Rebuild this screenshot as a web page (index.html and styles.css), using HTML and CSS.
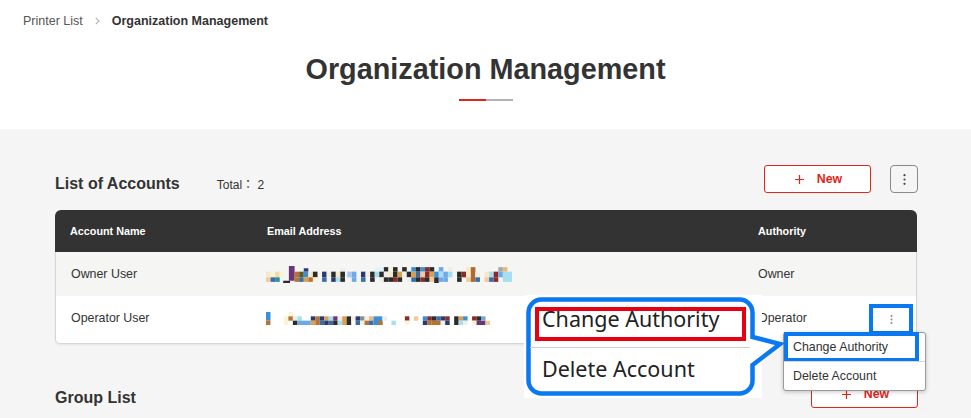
FILE: index.html
```html
<!DOCTYPE html>
<html lang="en">
<head>
<meta charset="utf-8">
<title>Organization Management</title>
<link rel="stylesheet" href="styles.css">
</head>
<body>
<header class="page-head">
  <nav class="crumbs">
    <span class="crumb">Printer List</span>
    <svg class="crumb-sep" width="5" height="8" viewBox="0 0 5 8"><path d="M0.8 0.8L4 4L0.8 7.2" fill="none" stroke="#b0b0b0" stroke-width="1.1"/></svg>
    <span class="crumb crumb--current">Organization Management</span>
  </nav>
  <h1 class="page-title">Organization Management</h1>
  <div class="title-rule"><span class="title-rule__red"></span><span class="title-rule__gray"></span></div>
</header>

<main class="content">
  <section class="block">
    <div class="block-head">
      <div class="block-title">
        <h2>List of Accounts</h2>
        <span class="total">Total： 2</span>
      </div>
      <div class="block-actions">
        <button class="btn-new" type="button">
          <svg width="9" height="9" viewBox="0 0 9 9"><path d="M4.5 0V9M0 4.5H9" stroke="#e0251b" stroke-width="1.2"/></svg>
          <span>New</span>
        </button>
        <button class="btn-more" type="button" aria-label="More">
          <svg width="3" height="11" viewBox="0 0 3 11"><circle cx="1.5" cy="1.2" r="1.1" fill="#444"/><circle cx="1.5" cy="5.5" r="1.1" fill="#444"/><circle cx="1.5" cy="9.8" r="1.1" fill="#444"/></svg>
        </button>
      </div>
    </div>

    <div class="table">
      <div class="table-head">
        <div class="th">Account Name</div>
        <div class="th">Email Address</div>
        <div class="th">Authority</div>
      </div>
      <div class="table-body">
        <div class="tr tr--shade">
          <div class="td">Owner User</div>
          <div class="td">
            <svg class="mosaic" width="246" height="17" viewBox="0 0 215 15" preserveAspectRatio="none">
              <rect x="0" y="5" width="4" height="5" fill="#f6e9c8"/><rect x="0" y="10" width="4" height="4" fill="#f2c9a0"/>
              <rect x="4" y="5" width="4" height="5" fill="#faf3d6"/><rect x="4" y="10" width="4" height="4" fill="#3a6ea5"/>
              <rect x="8" y="5" width="4" height="5" fill="#f3d9a8"/><rect x="8" y="10" width="4" height="4" fill="#2a8fa0"/>
              <rect x="12" y="5" width="4" height="5" fill="#faf3d6"/>
              <rect x="15" y="13" width="6" height="2" fill="#2b2b2b"/>
              <rect x="20" y="0" width="5" height="13" fill="#6b3576"/>
              <rect x="25" y="5" width="4" height="5" fill="#b87333"/><rect x="25" y="10" width="4" height="4" fill="#b87333"/>
              <rect x="29" y="5" width="4" height="5" fill="#5b5b2e"/><rect x="29" y="10" width="4" height="4" fill="#3a6ea5"/>
              <rect x="33" y="2" width="4" height="3" fill="#2b3a6e"/><rect x="33" y="5" width="4" height="5" fill="#3a8fd9"/><rect x="33" y="10" width="4" height="4" fill="#d8a050"/>
              <rect x="37" y="5" width="4" height="5" fill="#f6e9c8"/><rect x="37" y="10" width="4" height="4" fill="#b87333"/>
              <rect x="41" y="5" width="4" height="5" fill="#2b2b2b"/><rect x="41" y="10" width="4" height="4" fill="#faf3d6"/>
              <rect x="49" y="5" width="4" height="5" fill="#2b3a6e"/><rect x="49" y="10" width="4" height="4" fill="#3a6ea5"/>
              <rect x="53" y="5" width="4" height="5" fill="#efefe8"/>
              <rect x="57" y="5" width="4" height="5" fill="#2b2b2b"/><rect x="57" y="10" width="4" height="4" fill="#2b3a6e"/>
              <rect x="61" y="5" width="4" height="5" fill="#f6e9c8"/><rect x="61" y="10" width="4" height="4" fill="#a8dff0"/>
              <rect x="65" y="2" width="4" height="3" fill="#efefe8"/><rect x="65" y="5" width="4" height="5" fill="#2b2b2b"/><rect x="65" y="10" width="4" height="4" fill="#2b2b2b"/>
              <rect x="71" y="5" width="4" height="5" fill="#a8c8f0"/>
              <rect x="75" y="5" width="4" height="5" fill="#6ea8e8"/><rect x="75" y="10" width="4" height="4" fill="#6ea8e8"/>
              <rect x="83" y="5" width="4" height="5" fill="#2b3a6e"/><rect x="83" y="10" width="4" height="4" fill="#3a6ea5"/>
              <rect x="87" y="5" width="4" height="5" fill="#efefe8"/>
              <rect x="91" y="5" width="4" height="5" fill="#2b2b2b"/><rect x="91" y="10" width="4" height="4" fill="#2b2b2b"/>
              <rect x="95" y="1" width="4" height="4" fill="#e3f4f8"/><rect x="95" y="5" width="4" height="5" fill="#a8dff0"/>
              <rect x="99" y="1" width="4" height="4" fill="#e3f4f8"/><rect x="99" y="5" width="4" height="5" fill="#2b2b2b"/><rect x="99" y="10" width="4" height="4" fill="#efefe8"/>
              <rect x="103" y="1" width="4" height="4" fill="#2b2b2b"/><rect x="103" y="5" width="4" height="5" fill="#efefe8"/><rect x="103" y="10" width="4" height="4" fill="#2b2b2b"/>
              <rect x="107" y="1" width="4" height="4" fill="#faf3d6"/><rect x="107" y="5" width="4" height="5" fill="#f6e9c8"/><rect x="107" y="10" width="4" height="4" fill="#2b2b2b"/>
              <rect x="111" y="1" width="4" height="4" fill="#2b2b2b"/><rect x="111" y="5" width="4" height="5" fill="#2b2b2b"/><rect x="111" y="10" width="4" height="4" fill="#8b2a2a"/>
              <rect x="115" y="5" width="4" height="5" fill="#d8a050"/><rect x="115" y="10" width="4" height="4" fill="#2b2b2b"/>
              <rect x="119" y="1" width="4" height="4" fill="#2b2b2b"/><rect x="119" y="5" width="4" height="5" fill="#efefe8"/>
              <rect x="123" y="5" width="4" height="5" fill="#2b2b2b"/><rect x="123" y="10" width="4" height="4" fill="#efefe8"/>
              <rect x="127" y="1" width="4" height="4" fill="#3a8fd9"/><rect x="127" y="5" width="4" height="5" fill="#d8a050"/><rect x="127" y="10" width="4" height="4" fill="#3a6ea5"/>
              <rect x="131" y="1" width="4" height="4" fill="#2b2b2b"/><rect x="131" y="5" width="4" height="5" fill="#3a6ea5"/><rect x="131" y="10" width="4" height="4" fill="#2b2b2b"/>
              <rect x="135" y="1" width="4" height="4" fill="#3a8fd9"/><rect x="135" y="5" width="4" height="5" fill="#f4c8a0"/><rect x="135" y="10" width="4" height="4" fill="#8b2a2a"/>
              <rect x="139" y="1" width="4" height="4" fill="#8b2a2a"/><rect x="139" y="5" width="4" height="5" fill="#8b2a2a"/><rect x="139" y="10" width="4" height="4" fill="#2b2b2b"/>
              <rect x="143" y="1" width="4" height="4" fill="#2b2b2b"/><rect x="143" y="5" width="4" height="5" fill="#d8a050"/><rect x="143" y="10" width="4" height="4" fill="#f3c89a"/>
              <rect x="147" y="5" width="4" height="5" fill="#3a8fd9"/><rect x="147" y="10" width="4" height="5" fill="#2b2b2b"/>
              <rect x="151" y="1" width="4" height="4" fill="#6ea8e8"/><rect x="151" y="5" width="4" height="5" fill="#a8dff0"/><rect x="151" y="10" width="4" height="4" fill="#6ea8e8"/>
              <rect x="155" y="5" width="4" height="5" fill="#6ea8e8"/><rect x="155" y="10" width="4" height="4" fill="#6ea8e8"/>
              <rect x="159" y="1" width="4" height="4" fill="#efefe8"/><rect x="159" y="5" width="4" height="5" fill="#a8dff0"/>
              <rect x="167" y="5" width="4" height="5" fill="#2b2b2b"/><rect x="167" y="10" width="4" height="4" fill="#2b2b2b"/>
              <rect x="171" y="5" width="4" height="5" fill="#8b2a2a"/>
              <rect x="175" y="1" width="4" height="4" fill="#f6e9c8"/><rect x="175" y="5" width="4" height="5" fill="#f6e9c8"/><rect x="175" y="10" width="4" height="4" fill="#f3c89a"/>
              <rect x="179" y="1" width="4" height="13" fill="#b06a30"/>
              <rect x="183" y="5" width="4" height="5" fill="#efefe8"/><rect x="183" y="10" width="4" height="4" fill="#3a6ea5"/>
              <rect x="191" y="5" width="4" height="5" fill="#f6e9c8"/><rect x="191" y="10" width="4" height="4" fill="#f4c8a0"/>
              <rect x="195" y="5" width="4" height="5" fill="#a8dff0"/><rect x="195" y="10" width="4" height="4" fill="#3a6ea5"/>
              <rect x="199" y="5" width="4" height="5" fill="#8b2a2a"/><rect x="199" y="10" width="4" height="4" fill="#8b2a2a"/>
              <rect x="203" y="1" width="4" height="4" fill="#a8a8a0"/><rect x="203" y="5" width="4" height="5" fill="#6ea8e8"/>
              <rect x="207" y="1" width="4" height="4" fill="#e8b880"/><rect x="207" y="5" width="8" height="9" fill="#a8dff0"/>
            </svg>
          </div>
          <div class="td">Owner</div>
        </div>
        <div class="tr tr--op">
          <div class="td">Operator User</div>
          <div class="td">
            <svg class="mosaic" width="224" height="13" viewBox="0 0 200 12" preserveAspectRatio="none">
              <rect x="0" y="0" width="4" height="8" fill="#3a8fd9"/><rect x="0" y="8" width="4" height="4" fill="#b87333"/>
              <rect x="16" y="4" width="4" height="8" fill="#faf3d6"/>
              <rect x="20" y="0" width="4" height="4" fill="#faf3d6"/><rect x="20" y="4" width="4" height="4" fill="#b87333"/>
              <rect x="24" y="4" width="4" height="4" fill="#efefe8"/><rect x="24" y="8" width="4" height="4" fill="#2b2b2b"/>
              <rect x="28" y="4" width="4" height="4" fill="#a8dff0"/><rect x="28" y="8" width="12" height="4" fill="#6ea8e8"/>
              <rect x="40" y="4" width="4" height="4" fill="#2b3a6e"/><rect x="40" y="8" width="4" height="4" fill="#d8a050"/>
              <rect x="44" y="4" width="4" height="8" fill="#b87333"/>
              <rect x="48" y="4" width="4" height="4" fill="#2b3a6e"/><rect x="48" y="8" width="4" height="4" fill="#3a6ea5"/>
              <rect x="52" y="4" width="4" height="4" fill="#d8a050"/><rect x="52" y="8" width="4" height="4" fill="#2b3a6e"/>
              <rect x="56" y="4" width="4" height="4" fill="#a8dff0"/><rect x="56" y="8" width="4" height="4" fill="#3a6ea5"/>
              <rect x="60" y="4" width="4" height="4" fill="#6b3576"/><rect x="60" y="8" width="4" height="4" fill="#2b2b2b"/>
              <rect x="64" y="4" width="4" height="4" fill="#efefe8"/><rect x="64" y="8" width="4" height="4" fill="#a8dff0"/>
              <rect x="68" y="4" width="4" height="8" fill="#d8a050"/>
              <rect x="72" y="4" width="4" height="8" fill="#2b2b2b"/>
              <rect x="76" y="4" width="4" height="4" fill="#efefe8"/>
              <rect x="80" y="4" width="4" height="4" fill="#2b3a6e"/><rect x="80" y="8" width="4" height="4" fill="#3a6ea5"/>
              <rect x="84" y="4" width="4" height="4" fill="#8c8c8c"/><rect x="84" y="8" width="4" height="4" fill="#efefe8"/>
              <rect x="88" y="4" width="4" height="4" fill="#efefe8"/><rect x="88" y="8" width="4" height="4" fill="#b87333"/>
              <rect x="92" y="4" width="4" height="4" fill="#e8b880"/><rect x="92" y="8" width="4" height="4" fill="#3a6ea5"/>
              <rect x="96" y="4" width="8" height="8" fill="#3a8fd9"/><rect x="100" y="8" width="4" height="4" fill="#b87333"/>
              <rect x="104" y="4" width="4" height="4" fill="#efefe8"/>
              <rect x="112" y="8" width="4" height="4" fill="#a8dff0"/>
              <rect x="124" y="4" width="4" height="4" fill="#8b2a2a"/><rect x="124" y="8" width="4" height="4" fill="#faf3d6"/>
              <rect x="132" y="4" width="4" height="4" fill="#f3c89a"/>
              <rect x="140" y="4" width="4" height="4" fill="#3a8fd9"/><rect x="140" y="8" width="4" height="4" fill="#2b3a6e"/>
              <rect x="144" y="4" width="4" height="4" fill="#8b2a2a"/><rect x="144" y="8" width="4" height="4" fill="#b87333"/>
              <rect x="148" y="4" width="4" height="4" fill="#2b2b2b"/><rect x="148" y="8" width="8" height="4" fill="#b87333"/>
              <rect x="152" y="4" width="4" height="4" fill="#3a6ea5"/>
              <rect x="156" y="4" width="4" height="4" fill="#2b3a6e"/><rect x="156" y="8" width="4" height="4" fill="#efefe8"/>
              <rect x="160" y="4" width="4" height="4" fill="#8b2a2a"/><rect x="160" y="8" width="4" height="4" fill="#2b3a6e"/>
              <rect x="168" y="4" width="4" height="8" fill="#2b2b2b"/>
              <rect x="172" y="4" width="4" height="4" fill="#d8a050"/><rect x="172" y="8" width="4" height="4" fill="#a8dff0"/>
              <rect x="176" y="4" width="4" height="4" fill="#3a8fd9"/><rect x="176" y="8" width="4" height="4" fill="#efefe8"/>
              <rect x="184" y="4" width="4" height="4" fill="#8b2a2a"/><rect x="184" y="8" width="4" height="4" fill="#faf3d6"/>
              <rect x="188" y="4" width="4" height="4" fill="#2b2b2b"/><rect x="188" y="8" width="8" height="4" fill="#6b3576"/>
              <rect x="192" y="4" width="4" height="4" fill="#6ea8e8"/>
              <rect x="196" y="8" width="4" height="4" fill="#f3c89a"/>
            </svg>
          </div>
          <div class="td td--auth">
            <span>Operator</span>
            <span class="kebab-wrap">
              <button class="btn-row-more" type="button" aria-label="Row menu">
                <svg width="3" height="9" viewBox="0 0 3 9"><circle cx="1.5" cy="1" r="1" fill="#888"/><circle cx="1.5" cy="4.5" r="1" fill="#888"/><circle cx="1.5" cy="8" r="1" fill="#888"/></svg>
              </button>
              <ul class="menu">
                <li class="menu__item menu__item--marked">Change Authority</li>
                <li class="menu__item">Delete Account</li>
              </ul>
            </span>
          </div>
        </div>
      </div>
    </div>
  </section>

  <section class="block">
    <div class="block-head">
      <div class="block-title">
        <h2>Group List</h2>
      </div>
      <div class="block-actions">
        <button class="btn-new" type="button">
          <svg width="9" height="9" viewBox="0 0 9 9"><path d="M4.5 0V9M0 4.5H9" stroke="#e0251b" stroke-width="1.2"/></svg>
          <span>New</span>
        </button>
      </div>
    </div>
  </section>

  <div class="callout">
    <svg class="callout__shape" width="262" height="104" viewBox="0 0 262 104">
      <rect x="0" y="0" width="238" height="103" fill="#fff"/>
      <path d="M17.5 4.5H215.5A13 13 0 0 1 228.5 17.5V42L256 49L228.5 70V85.5A13 13 0 0 1 215.5 98.5H17.5A13 13 0 0 1 4.5 85.5V17.5A13 13 0 0 1 17.5 4.5Z" fill="#fff" stroke="#0a78f0" stroke-width="4.5" stroke-linejoin="miter"/>
    </svg>
    <div class="callout__body">
      <div class="callout__item callout__item--boxed">Change Authority</div>
      <div class="callout__rule"></div>
      <div class="callout__item callout__item--plain">Delete Account</div>
    </div>
  </div>
</main>
</body>
</html>
```

FILE: styles.css
```css
* { box-sizing: border-box; }

html, body { margin: 0; padding: 0; }

body {
  width: 971px;
  background: #f5f5f5;
  color: #333;
  font-family: "Liberation Sans", Arial, sans-serif;
  overflow: hidden;
}

/* ---------- header ---------- */
.page-head {
  background: #fff;
  height: 129px;
  padding-top: 13px;
}

.crumbs {
  display: flex;
  align-items: center;
  height: 16px;
  padding-left: 23px;
  font-size: 12.5px;
  line-height: 16px;
}

.crumb { color: #555; }
.crumb--current { color: #333; font-weight: 700; }
.crumb-sep { margin: 0 12px; }

.page-title {
  margin: 23px 0 0;
  text-align: center;
  font-size: 28.8px;
  line-height: 34px;
  font-weight: 700;
  color: #333;
}

.title-rule {
  display: flex;
  justify-content: center;
  margin-top: 13px;
}
.title-rule__red { width: 27px; height: 2px; background: #e0251b; }
.title-rule__gray { width: 27px; height: 2px; background: #b3b3b3; }

/* ---------- content ---------- */
.content {
  position: relative;
  padding: 36px 54px 40px 55px;
}

.block + .block { margin-top: 36px; }

.block-head {
  display: flex;
  justify-content: space-between;
  align-items: flex-start;
  height: 28px;
}

.block-title {
  display: flex;
  align-items: baseline;
  padding-top: 10px;
}

.block-title h2 {
  margin: 0;
  font-size: 16px;
  line-height: 16px;
  font-weight: 700;
  color: #333;
}

.total {
  margin-left: 37px;
  font-size: 12px;
  color: #333;
  font-family: "Liberation Sans", "Noto Sans CJK JP", sans-serif;
}

.block-actions {
  display: flex;
  gap: 19px;
  margin-right: -1px;
}

.btn-new {
  display: flex;
  align-items: center;
  justify-content: center;
  gap: 13px;
  width: 107px;
  height: 28px;
  padding: 0 0 0 2px;
  border: 1px solid #e0251b;
  border-radius: 3px;
  background: #fff;
  color: #e0251b;
  font-family: inherit;
  font-size: 12.4px;
  font-weight: 700;
}

.btn-more {
  display: flex;
  align-items: center;
  justify-content: center;
  width: 28px;
  height: 28px;
  padding: 0;
  border: 1px solid #8a8a8a;
  border-radius: 4px;
  background: transparent;
}

/* ---------- table ---------- */
.table { margin-top: 17px; }

.table-head {
  display: grid;
  grid-template-columns: 197px 491px 1fr;
  align-items: center;
  height: 42px;
  background: #333;
  border-radius: 6px 6px 0 0;
}

.th {
  padding-left: 15px;
  color: #fff;
  font-size: 10.8px;
  font-weight: 700;
}

.table-body {
  border: 1px solid #d6d6d6;
  border-top: 0;
  border-radius: 0 0 5px 5px;
  background: #fff;
  box-shadow: 0 1px 2px rgba(0, 0, 0, 0.08);
}

.tr {
  display: grid;
  grid-template-columns: 196px 491px 1fr;
  align-items: center;
  font-size: 12.4px;
  line-height: 16px;
  color: #333;
}

.tr--shade {
  height: 44px;
  background: #f5f5f3;
}

.tr--op {
  height: 47px;
  align-items: start;
  border-radius: 0 0 5px 5px;
}

.td { padding-left: 15px; }
.tr--op .td { padding-top: 14px; }

.mosaic { display: block; margin-left: -1px; }
.tr--op .mosaic { margin-top: 2px; }

.td--auth {
  display: flex;
  justify-content: space-between;
  align-items: flex-start;
  padding-right: 7px;
}

.kebab-wrap {
  position: relative;
  margin-top: -2px;
}

.btn-row-more {
  display: flex;
  align-items: center;
  justify-content: center;
  width: 36px;
  height: 23px;
  padding: 0;
  border: 0;
  background: transparent;
  outline: 4px solid #0a78f0;
}

/* dropdown menu (overlay) */
.menu {
  position: absolute;
  left: -90px;
  top: 24px;
  z-index: 2;
  width: 143px;
  margin: 0;
  padding: 0;
  list-style: none;
  background: #fff;
  border: 1px solid #9a9a9a;
  border-radius: 3px;
  box-shadow: 0 1px 4px rgba(0, 0, 0, 0.22);
}

.menu__item {
  position: relative;
  height: 28px;
  padding-left: 9px;
  font-size: 12.4px;
  line-height: 28px;
  color: #333;
}

.menu__item + .menu__item { border-top: 1px solid #d8d8d8; height: 29px; }

.menu__item--marked::after {
  content: "";
  position: absolute;
  left: 0;
  top: -1px;
  width: 135px;
  height: 30px;
  border: 4px solid #0a78f0;
  box-sizing: border-box;
}

/* ---------- annotation callout ---------- */
.callout {
  position: absolute;
  left: 524px;
  top: 166px;
  z-index: 3;
  width: 262px;
  height: 104px;
}

.callout__shape {
  position: absolute;
  left: 0;
  top: 0;
}

.callout__body {
  position: relative;
  padding: 12px 0 0 11px;
  font-family: "Noto Sans", "Open Sans", sans-serif;
  font-size: 21.5px;
  color: #222;
}

.callout__item { line-height: 16px; white-space: nowrap; }

.callout__item--boxed {
  width: 211px;
  height: 34px;
  padding-left: 3px;
  border: 4px solid #e60012;
}

.callout__rule {
  width: 220px;
  height: 1px;
  margin: 6px 0 0 -5px;
  background: #cfcfcf;
}

.callout__item--plain { margin: 13px 0 0 7px; }
```
